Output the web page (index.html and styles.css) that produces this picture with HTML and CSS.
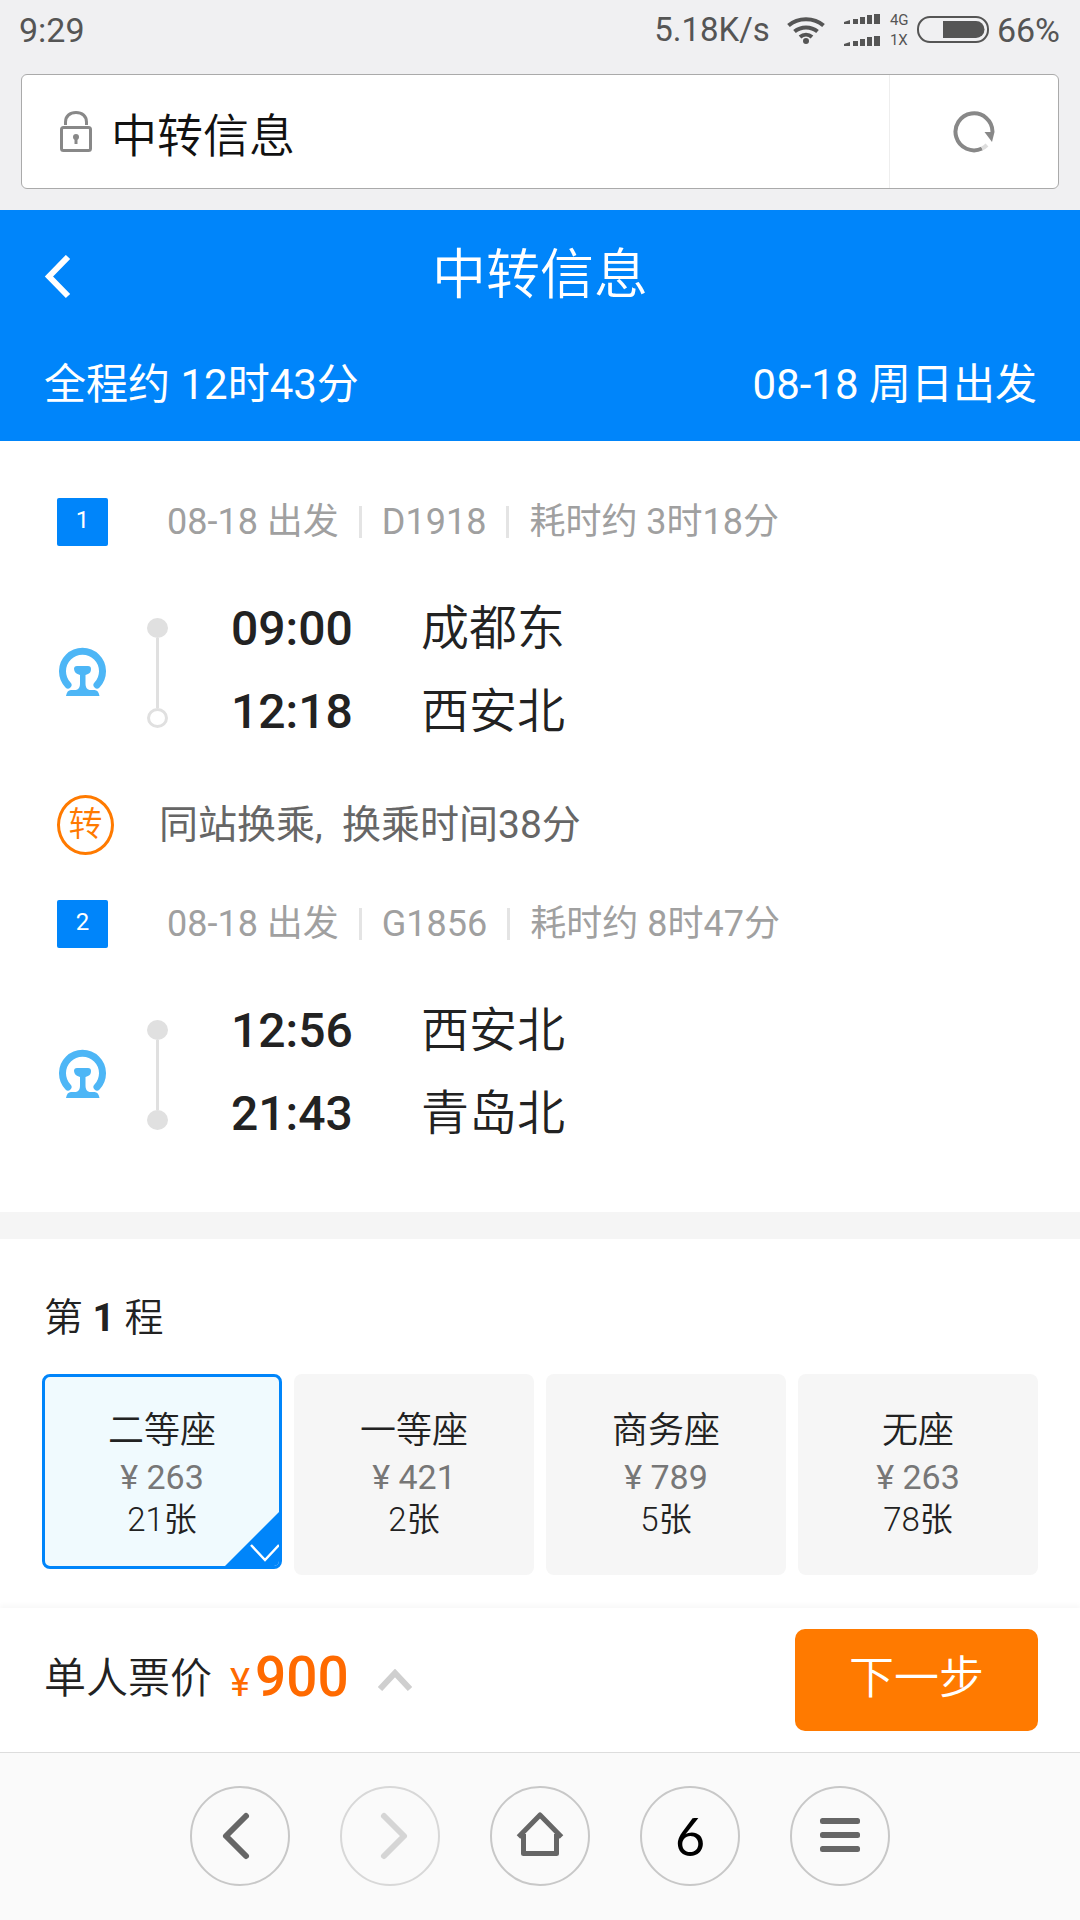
FILE: index.html
```html
<!DOCTYPE html>
<html lang="zh-CN">
<head>
<meta charset="UTF-8" />
<meta name="viewport" content="width=device-width, initial-scale=1" />
<title>中转信息</title>
<link rel="stylesheet" href="styles.css">
</head>
<body>
  <div class="statusbar">
    <span class="clock">9:29</span>
    <div class="status-right">
      <span class="speed">5.18K/s</span>
      <svg class="wifi" width="38" height="28" viewBox="0 0 38 28" fill="none" stroke="#555" stroke-width="4">
        <path d="M1.500 9.500C11 1 27 1 36.500 9.500"/>
        <path d="M7.500 15.500C14 10 24 10 30.500 15.500"/>
        <path d="M13 21C16.500 18 21.500 18 25 21"/>
        <circle cx="19" cy="25" r="3" fill="#555" stroke="none"/>
      </svg>
      <svg class="signal" width="37" height="32" viewBox="0 0 37 32" fill="#555">
        <path d="M0 8l6-2v4H0zM9 5h5v5H9zM16 3h5v7h-5zM23 1h5v9h-5zM30 0h6v10h-6z"/>
        <path d="M0 30l6-2v4H0zM9 27h5v5H9zM16 25h5v7h-5zM23 23h5v9h-5zM30 22h6v10h-6z"/>
      </svg>
      <div class="net-type"><span>4G</span><span>1X</span></div>
      <svg class="battery" width="72" height="27" viewBox="0 0 72 27">
        <rect x="1" y="1" width="70" height="25" rx="12" fill="none" stroke="#555" stroke-width="2"/>
        <path d="M26 5h33a8.500 8.500 0 0 1 0 17H26z" fill="#555"/>
      </svg>
      <span class="percent">66%</span>
    </div>
  </div>

  <div class="urlwrap">
    <div class="urlbox">
      <div class="url-main">
        <svg width="32" height="41" viewBox="0 0 32 41" fill="none" stroke="#888" stroke-width="3">
          <path d="M5.500 14V11C5.500 5 10 1.500 16 1.500S26.500 5 26.500 11v3"/>
          <rect x="1.500" y="16.500" width="29" height="23" rx="2"/>
          <circle cx="16" cy="26" r="3" fill="#888" stroke="none"/>
          <path d="M16 27v6" />
        </svg>
        <span>中转信息</span>
      </div>
      <div class="url-reload">
        <svg width="42" height="42" viewBox="0 0 42 42" fill="none">
          <path d="M29 37.500A18.500 18.500 0 1 1 39.500 21" stroke="#888" stroke-width="4"/>
          <path d="M29 37.500A18.500 18.500 0 0 0 34 34" stroke="#ddd" stroke-width="4"/>
          <path d="M31.500 21H41.500L39 31z" fill="#888"/>
        </svg>
      </div>
    </div>
  </div>

  <header class="titlebar">
    <div class="title-row">
      <svg class="back" width="28" height="44" viewBox="0 0 28 44" fill="none" stroke="#fff" stroke-width="6">
        <path d="M24 2L5 21.500 24 41"/>
      </svg>
      <h1>中转信息</h1>
    </div>
    <div class="summary-row">
      <span>全程约 12时43分</span>
      <span>08-18 周日出发</span>
    </div>
  </header>

  <section class="trip">
    <div class="seg-head">
      <span class="seg-no">1</span>
      <span>08-18 出发</span><i class="sep"></i>
      <span>D1918</span><i class="sep"></i>
      <span>耗时约 3时18分</span>
    </div>
    <div class="seg-body">
      <svg class="rail-logo" width="47" height="49" viewBox="0 0 47 49">
        <path d="M9 38A20 20 0 1 1 38 38" fill="none" stroke="#4db6f6" stroke-width="7" stroke-linecap="round"/>
        <path d="M15 22q0-3 3-3h11q3 0 3 3q0 4-3 5l-2.500 1v9q0 5 4 6h5q4 0 5 6H7q1-6 5-6h5q4-1 4-6v-9l-2.500-1q-3-1-3.500-5z" fill="#4db6f6"/>
      </svg>
      <div class="rail">
        <i class="dot"></i><i class="line"></i><i class="dot open"></i>
      </div>
      <div class="stops">
        <div class="stop"><b>09:00</b><span>成都东</span></div>
        <div class="stop"><b>12:18</b><span>西安北</span></div>
      </div>
    </div>

    <div class="transfer">
      <span class="transfer-mark">转</span>
      <span>同站换乘,&nbsp; 换乘时间38分</span>
    </div>

    <div class="seg-head">
      <span class="seg-no">2</span>
      <span>08-18 出发</span><i class="sep"></i>
      <span>G1856</span><i class="sep"></i>
      <span>耗时约 8时47分</span>
    </div>
    <div class="seg-body">
      <svg class="rail-logo" width="47" height="49" viewBox="0 0 47 49">
        <path d="M9 38A20 20 0 1 1 38 38" fill="none" stroke="#4db6f6" stroke-width="7" stroke-linecap="round"/>
        <path d="M15 22q0-3 3-3h11q3 0 3 3q0 4-3 5l-2.500 1v9q0 5 4 6h5q4 0 5 6H7q1-6 5-6h5q4-1 4-6v-9l-2.500-1q-3-1-3.500-5z" fill="#4db6f6"/>
      </svg>
      <div class="rail">
        <i class="dot"></i><i class="line"></i><i class="dot"></i>
      </div>
      <div class="stops">
        <div class="stop"><b>12:56</b><span>西安北</span></div>
        <div class="stop"><b>21:43</b><span>青岛北</span></div>
      </div>
    </div>
  </section>

  <section class="seats">
    <div class="leg-title">第 <b>1</b> 程</div>
    <div class="seat-grid">
      <div class="seat selected">
        <div class="seat-name">二等座</div>
        <div class="seat-price">¥ 263</div>
        <div class="seat-left">21张</div>
        <svg class="seat-check" width="60" height="60" viewBox="0 0 60 60" fill="none">
          <path d="M60 0V60H0z" fill="#0085fa"/>
          <path d="M29 36l14 15 14-15" stroke="#fff" stroke-width="2.500"/>
        </svg>
      </div>
      <div class="seat">
        <div class="seat-name">一等座</div>
        <div class="seat-price">¥ 421</div>
        <div class="seat-left">2张</div>
      </div>
      <div class="seat">
        <div class="seat-name">商务座</div>
        <div class="seat-price">¥ 789</div>
        <div class="seat-left">5张</div>
      </div>
      <div class="seat">
        <div class="seat-name">无座</div>
        <div class="seat-price">¥ 263</div>
        <div class="seat-left">78张</div>
      </div>
    </div>
  </section>

  <div class="paybar">
    <div class="fare">
      <span class="fare-label">单人票价</span>
      <span class="fare-yen">¥</span>
      <span class="fare-num">900</span>
      <svg width="34" height="22" viewBox="0 0 34 22" fill="none" stroke="#cfcfcf" stroke-width="6">
        <path d="M2 20L17 4l15 16"/>
      </svg>
    </div>
    <button class="next">下一步</button>
  </div>

  <nav class="browserbar">
    <div class="navbtn">
      <svg width="96" height="96" viewBox="0 0 96 96" fill="none" stroke="#666" stroke-width="6" stroke-linecap="round" stroke-linejoin="round">
        <path d="M54 28L34 48 54 68"/>
      </svg>
    </div>
    <div class="navbtn off">
      <svg width="96" height="96" viewBox="0 0 96 96" fill="none" stroke="#d5d5d5" stroke-width="6" stroke-linecap="round" stroke-linejoin="round">
        <path d="M42 28L62 48 42 68"/>
      </svg>
    </div>
    <div class="navbtn">
      <svg width="96" height="96" viewBox="0 0 96 96" fill="none" stroke="#666" stroke-width="5" stroke-linejoin="round">
        <path d="M26.500 49L48 27 69.500 49"/>
        <path d="M31.500 46V65.500H64.500V46"/>
      </svg>
    </div>
    <div class="navbtn tabs">6</div>
    <div class="navbtn">
      <svg width="96" height="96" viewBox="0 0 96 96" fill="#666">
        <rect x="28" y="30" width="40" height="6" rx="2.500"/>
        <rect x="28" y="44" width="40" height="6" rx="2.500"/>
        <rect x="28" y="58" width="40" height="6" rx="2.500"/>
      </svg>
    </div>
  </nav>
</body>
</html>
```

FILE: styles.css
```css
* {
  box-sizing: border-box;
}
body {
  margin: 0;
  width: 1080px;
  height: 1920px;
  overflow: hidden;
  display: flex;
  flex-direction: column;
  background: white;
  font-family: Roboto, 'Noto Sans CJK SC', sans-serif;
}

/* Phone status bar */
.statusbar {
  height: 74px;
  padding: 0 20px 15px 19px;
  display: flex;
  align-items: center;
  justify-content: space-between;
  background: #f0f0f2;
  color: #555;
  font-size: 34px;
  line-height: 40px;
}
.status-right {
  display: flex;
  align-items: center;
}
.speed {
  margin-right: 17px;
  font-size: 33px;
}
.wifi {
  margin-right: 19px;
}
.signal {
  margin-right: 9px;
}
.net-type {
  display: flex;
  flex-direction: column;
  width: 27px;
  font-size: 15px;
  line-height: 20px;
}
.battery {
  margin-right: 8px;
}

/* Address bar */
.urlwrap {
  height: 136px;
  padding: 0 21px 21px;
  background: #f0f0f2;
}
.urlbox {
  height: 115px;
  display: flex;
  background: white;
  border: 1px solid #aaa;
  border-radius: 6px;
}
.url-main {
  flex: 1;
  display: flex;
  align-items: center;
  gap: 19px;
  padding-left: 38px;
  font-size: 46px;
  font-weight: 350;
  color: #111;
}
.url-reload {
  width: 169px;
  display: flex;
  align-items: center;
  justify-content: center;
  border-left: 1px solid #eee;
}

/* Blue title */
.titlebar {
  height: 231px;
  background: #0085fa;
  color: white;
}
.title-row {
  height: 122px;
  padding-top: 9px;
  position: relative;
  display: flex;
  align-items: center;
  justify-content: center;
}
.back {
  position: absolute;
  left: 44px;
  top: 45px;
}
h1 {
  margin: 0;
  font-size: 54px;
  line-height: 70px;
  font-weight: 350;
}
.summary-row {
  display: flex;
  justify-content: space-between;
  align-items: center;
  height: 60px;
  margin-top: 23px;
  padding: 0 43px 0 44px;
  font-size: 42px;
  line-height: 56px;
}

/* Trip segments */
.trip {
  height: 771px;
  padding-top: 57px;
}
.seg-head {
  height: 48px;
  padding-left: 57px;
  display: flex;
  align-items: center;
  font-size: 36px;
  line-height: 48px;
  color: #a0a0a0;
}
.seg-no {
  width: 51px;
  height: 48px;
  margin-right: 59px;
  background: #0085fa;
  border-radius: 2px;
  color: white;
  font-size: 24px;
  line-height: 44px;
  text-align: center;
}
.sep {
  width: 3px;
  height: 32px;
  margin: 0 20px;
  background: #e4e4e4;
}
.seg-body {
  height: 166px;
  margin-top: 40px;
  display: flex;
  align-items: center;
}
.rail-logo {
  margin-left: 59px;
  margin-top: 4px;
}
.rail {
  width: 21px;
  height: 110px;
  margin-left: 41px;
  margin-top: 8px;
  display: flex;
  flex-direction: column;
  align-items: center;
}
.dot {
  width: 21px;
  height: 20px;
  border-radius: 50%;
  background: #e0e0e0;
}
.dot.open {
  background: white;
  border: 3px solid #e0e0e0;
}
.line {
  flex: 1;
  width: 3px;
  background: #e0e0e0;
}
.stops {
  margin-left: 63px;
  margin-top: 2px;
}
.stop {
  height: 83px;
  display: flex;
  align-items: center;
  color: #222;
}
.stop b {
  width: 190px;
  font-size: 48px;
  line-height: 60px;
  font-weight: 500;
}
.stop span {
  font-size: 48px;
  line-height: 60px;
  font-weight: 350;
}
.transfer {
  height: 60px;
  margin: 43px 0 45px 57px;
  display: flex;
  align-items: center;
  font-size: 39px;
  line-height: 48px;
  color: #666;
}
.transfer-mark {
  width: 57px;
  height: 60px;
  margin-right: 45px;
  border: 3px solid #ff7a00;
  border-radius: 50%;
  color: #ff7a00;
  font-size: 34px;
  font-weight: 350;
  line-height: 52px;
  text-align: center;
}

/* Seat picker */
.seats {
  height: 396px;
  border-top: 27px solid #f5f5f5;
  padding: 54px 42px 0;
}
.leg-title {
  height: 50px;
  padding-left: 2px;
  font-size: 39px;
  font-weight: 350;
  line-height: 50px;
  color: #222;
}
.leg-title b {
  font-weight: 700;
}
.seat-grid {
  margin-top: 31px;
  display: grid;
  grid-template-columns: repeat(4, 240px);
  gap: 12px;
  align-items: start;
}
.seat {
  height: 201px;
  padding-top: 32px;
  background: #f6f6f6;
  border-radius: 8px;
  text-align: center;
}
.seat.selected {
  position: relative;
  height: 195px;
  padding-top: 29px;
  background: #f0fafe;
  border: 3px solid #0085fa;
  overflow: hidden;
}
.seat-check {
  position: absolute;
  right: -3px;
  bottom: -3px;
}
.seat-name {
  font-size: 36px;
  line-height: 50px;
  font-weight: 350;
  color: #222;
}
.seat-price {
  font-size: 34px;
  line-height: 43px;
  color: #777;
}
.seat-left {
  margin-top: 2px;
  font-size: 33px;
  line-height: 38px;
  font-weight: 350;
  color: #222;
}

/* Pay bar */
.paybar {
  height: 144px;
  padding: 0 42px 0 44px;
  display: flex;
  align-items: center;
  justify-content: space-between;
  box-shadow: 0 -3px 5px rgba(0,0,0,0.03);
  position: relative;
  background: white;
}
.fare {
  display: flex;
  align-items: center;
}
.fare-label {
  margin-bottom: 2px;
  font-size: 42px;
  line-height: 56px;
  font-weight: 350;
  color: #222;
}
.fare-yen {
  margin-left: 18px;
  margin-top: 6px;
  font-size: 38px;
  line-height: 56px;
  color: #ff6a00;
}
.fare-num {
  margin-left: 5px;
  margin-bottom: 7px;
  font-size: 55px;
  line-height: 60px;
  font-weight: 500;
  color: #ff6a00;
}
.fare svg {
  margin-left: 29px;
}
.next {
  width: 243px;
  height: 102px;
  padding: 0 0 12px;
  border: none;
  border-radius: 10px;
  background: #ff7a00;
  color: white;
  font-family: inherit;
  font-size: 45px;
  font-weight: 350;
}

/* Browser toolbar */
.browserbar {
  flex: 1;
  display: flex;
  justify-content: center;
  align-items: center;
  gap: 50px;
  padding: 0 0 1px;
  background: #fafafa;
  border-top: 1px solid #ddd;
}
.navbtn {
  width: 100px;
  height: 100px;
  display: flex;
  align-items: center;
  justify-content: center;
  border: 2px solid #c8c8c8;
  border-radius: 50%;
}
.navbtn.off {
  border-color: #d8d8d8;
}
.tabs {
  font-family: Lato, sans-serif;
  font-size: 52px;
  line-height: 60px;
  color: #000;
}
```
